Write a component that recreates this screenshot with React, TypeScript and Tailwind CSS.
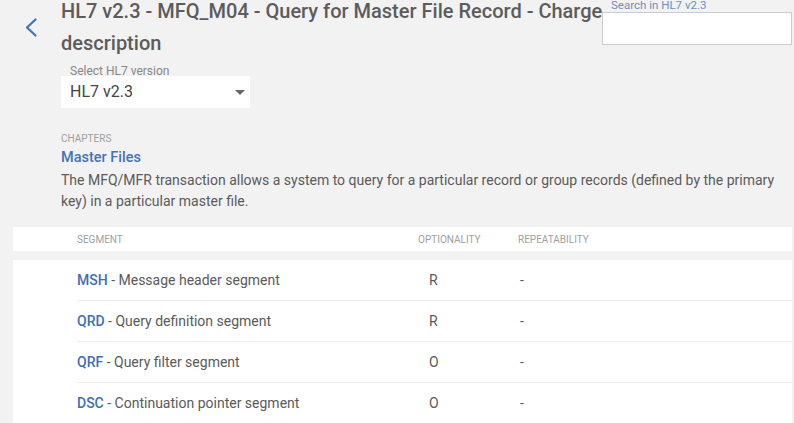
interface Segment {
  code: string;
  name: string;
  optionality: string;
  repeatability: string;
}

const segments: Segment[] = [
  { code: 'MSH', name: 'Message header segment', optionality: 'R', repeatability: '-' },
  { code: 'QRD', name: 'Query definition segment', optionality: 'R', repeatability: '-' },
  { code: 'QRF', name: 'Query filter segment', optionality: 'O', repeatability: '-' },
  { code: 'DSC', name: 'Continuation pointer segment', optionality: 'O', repeatability: '-' },
];

export default function App() {
  return (
    <div className="w-[794px] h-[423px] overflow-hidden bg-[#f2f2f2] font-['Roboto','Liberation_Sans',sans-serif] text-[#555]">
      <div className="flex">
        <div className="w-[61px] shrink-0 pl-[24px] pt-[17px]">
          <svg width="14" height="21" viewBox="0 0 14 21" fill="none">
            <path d="M11.5 2.5 L3 10.5 L11.5 18.5" stroke="#3c74bb" strokeWidth="2.2" strokeLinecap="round" strokeLinejoin="round" />
          </svg>
        </div>
        <h1 className="w-[570px] shrink-0 -mt-[5px] text-[20px] leading-[32px] font-medium text-[#5c5c5c]">
          HL7 v2.3 - MFQ_M04 - Query for Master File Record - Charge description
        </h1>
        <div className="relative w-[190px] shrink-0 -ml-[29px]">
          <label className="block pl-[9px] -mt-[1px] text-[11.5px] leading-[13px] text-[#6b8fc8]">Search in HL7 v2.3</label>
          <input className="block w-[190px] h-[33px] bg-white border border-[#cccccc] outline-none" />
        </div>
      </div>

      <div className="pl-[61px] pt-[5px]">
        <div className="pl-[9px] text-[12px] leading-[14px] text-[#888]">Select HL7 version</div>
        <div className="-mt-[2px] w-[189px] h-[32px] bg-white flex items-center justify-between pl-[9px] pr-[5px]">
          <span className="text-[16px] text-[#444]">HL7 v2.3</span>
          <svg width="10" height="5" viewBox="0 0 10 5">
            <path d="M0 0 L10 0 L5 5 Z" fill="#666" />
          </svg>
        </div>

        <div className="mt-[25px] text-[10px] leading-[12px] uppercase text-[#9e9e9e]">Chapters</div>
        <div className="mt-[4px] text-[14.5px] leading-[18px] font-medium text-[#4373b8]">Master Files</div>
        <p className="mt-[3px] w-[720px] text-[14px] leading-[21px] text-[#5a5a5a]">
          The MFQ/MFR transaction allows a system to query for a particular record or group records (defined by the primary key) in a particular master file.
        </p>
      </div>

      <div className="ml-[13px] mr-[2px] mt-[15px]">
        <div className="h-[24px] bg-white flex items-center text-[10px] uppercase text-[#a0a0a0]">
          <div className="w-[405px] pl-[64px]">Segment</div>
          <div className="w-[100px]">Optionality</div>
          <div>Repeatability</div>
        </div>
        <div className="mt-[9px] bg-white">
          {segments.map((s) => (
            <div key={s.code} className="ml-[64px] h-[41px] flex items-center border-b border-[#ececec] text-[14px] text-[#5a5a5a]">
              <div className="w-[341px]">
                <span className="font-medium text-[#3f6fb5]">{s.code}</span> - {s.name}
              </div>
              <div className="w-[102px] pl-[11px]">{s.optionality}</div>
              <div>{s.repeatability}</div>
            </div>
          ))}
        </div>
      </div>
    </div>
  );
}
